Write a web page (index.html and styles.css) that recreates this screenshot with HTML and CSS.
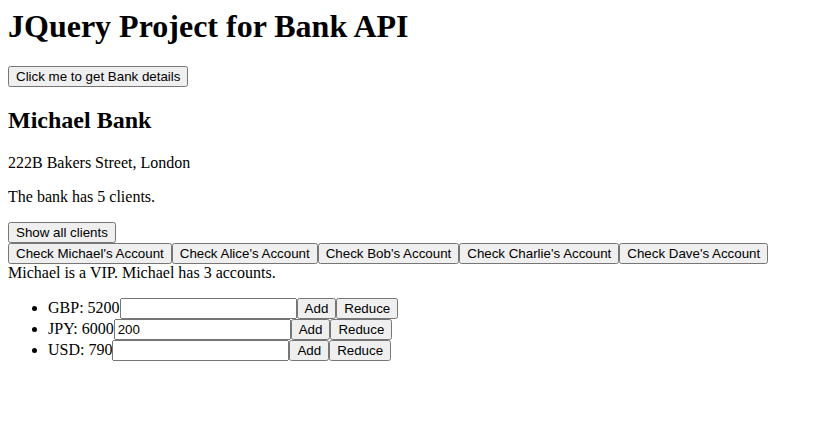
FILE: index.html
```html
<!DOCTYPE html>
<html>
<head>
<meta charset="utf-8">
<title>JQuery Project for Bank API</title>
<link rel="stylesheet" href="styles.css">
</head>
<body>
<h1 class="title">JQuery Project for Bank API</h1>
<button class="btn">Click me to get Bank details</button>
<h2>Michael Bank</h2>
<p>222B Bakers Street, London</p>
<p>The bank has 5 clients.</p>
<button class="btn">Show all clients</button>
<div class="clients"><button class="btn">Check Michael's Account</button><button class="btn">Check Alice's Account</button><button class="btn">Check Bob's Account</button><button class="btn">Check Charlie's Account</button><button class="btn">Check Dave's Account</button></div>
<div class="info">Michael is a VIP. Michael has 3 accounts.</div>
<ul class="accounts">
<li>GBP: 5200<input class="amount" type="text"><button class="btn">Add</button><button class="btn">Reduce</button></li>
<li>JPY: 6000<input class="amount" type="text" value="200"><button class="btn">Add</button><button class="btn">Reduce</button></li>
<li>USD: 790<input class="amount" type="text"><button class="btn">Add</button><button class="btn">Reduce</button></li>
</ul>
</body>
</html>
```
FILE: styles.css
```css
body {
  margin: 8px;
  font-family: "Liberation Serif", serif;
  font-size: 16px;
  color: #000;
  background: #fff;
}
.title {
  font-size: 32px;
  margin: 0 0 21.44px;
}
.btn, .amount {
  font-family: "Liberation Sans", Arial, sans-serif;
  font-size: 13.333px;
}
.amount {
  width: 169px;
}
```
